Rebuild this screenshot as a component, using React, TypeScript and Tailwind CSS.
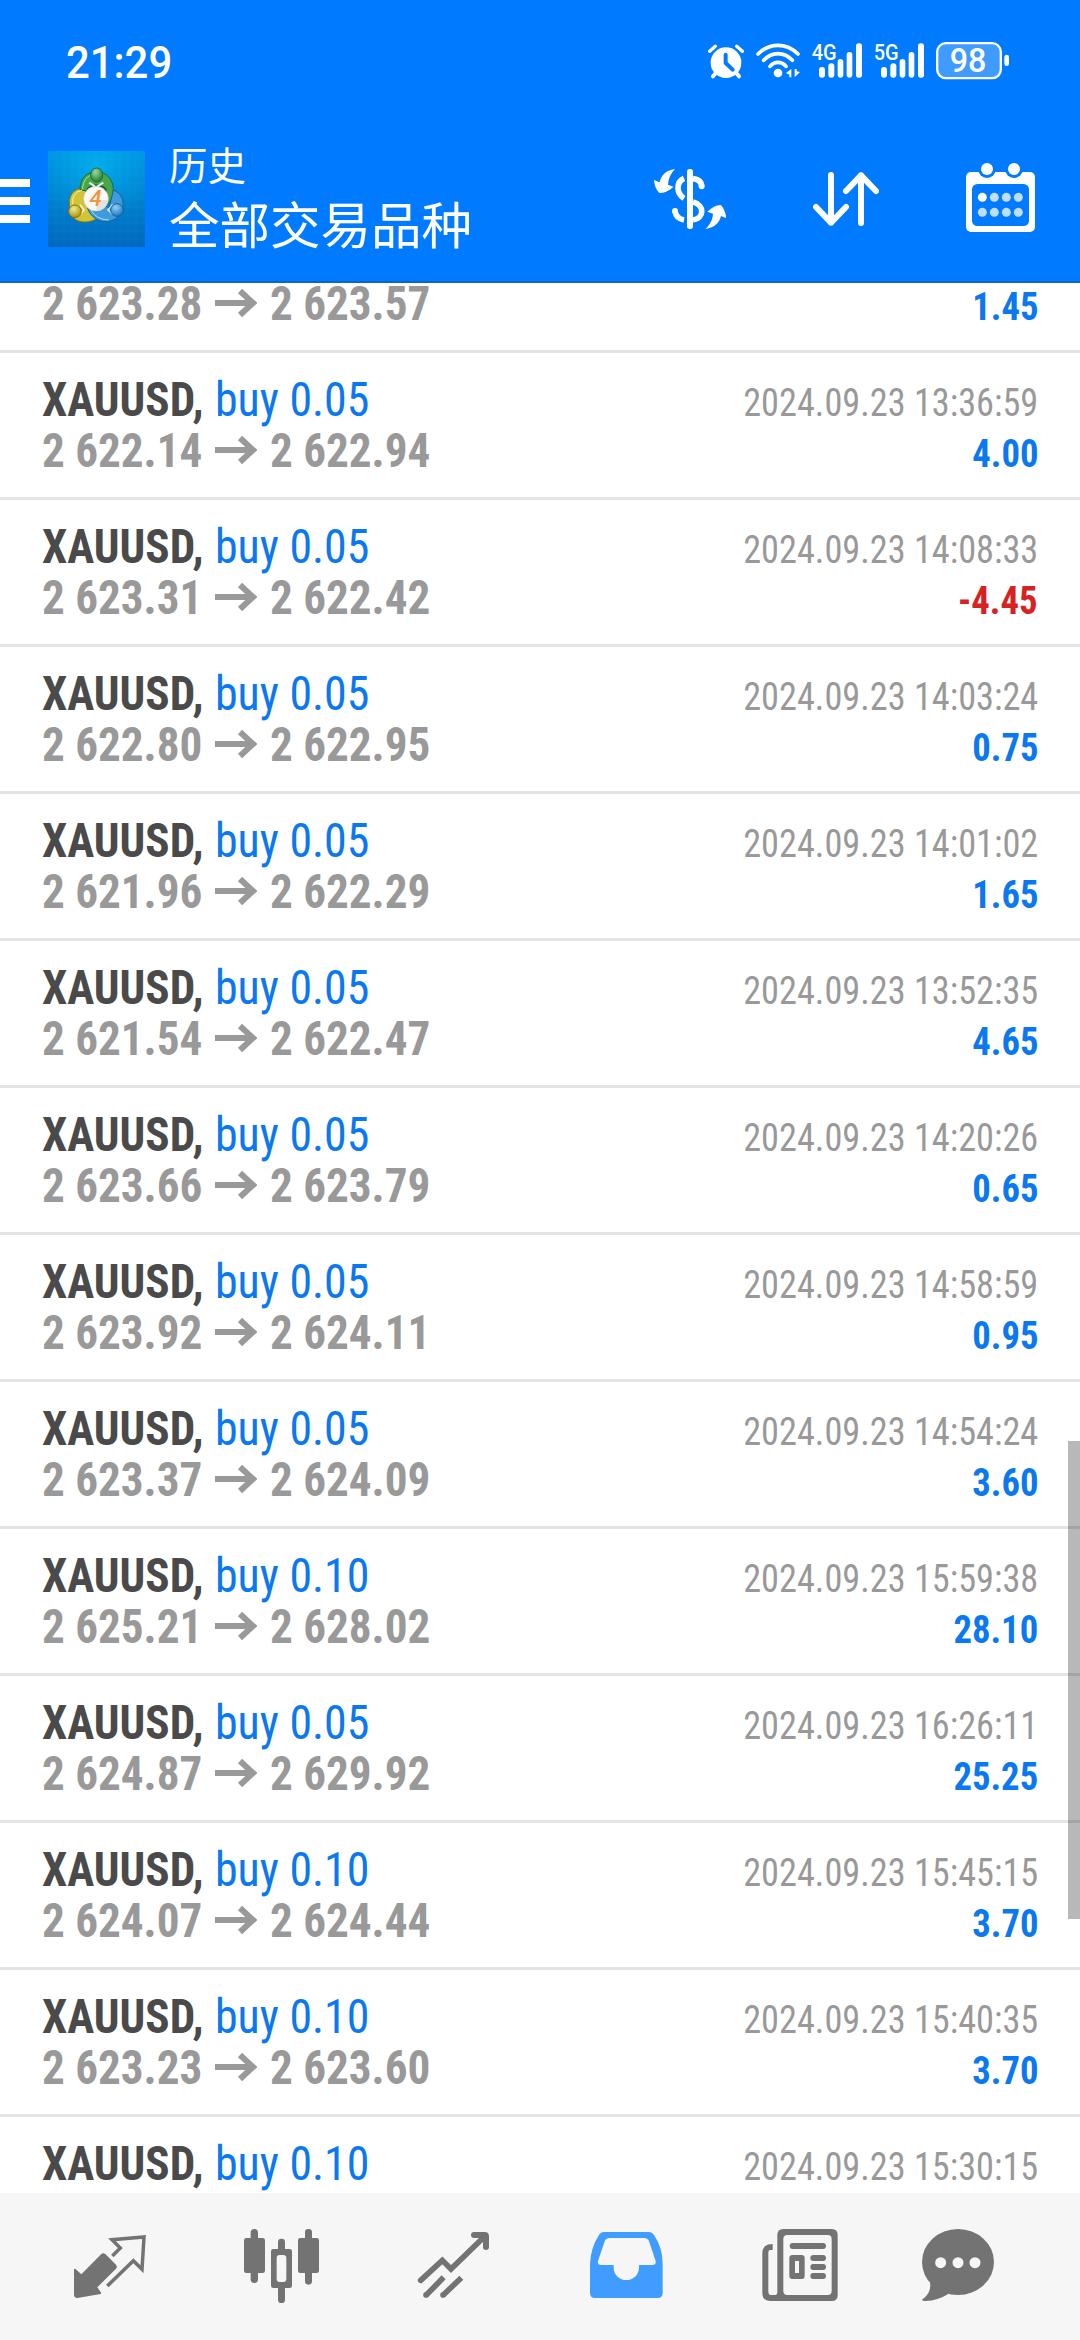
type Deal = {
  volume: string;
  from?: string;
  to?: string;
  time?: string;
  profit?: string;
};

const deals: Deal[] = [
  { volume: "0.05", from: "2 623.28", to: "2 623.57", profit: "1.45" },
  { volume: "0.05", from: "2 622.14", to: "2 622.94", time: "2024.09.23 13:36:59", profit: "4.00" },
  { volume: "0.05", from: "2 623.31", to: "2 622.42", time: "2024.09.23 14:08:33", profit: "-4.45" },
  { volume: "0.05", from: "2 622.80", to: "2 622.95", time: "2024.09.23 14:03:24", profit: "0.75" },
  { volume: "0.05", from: "2 621.96", to: "2 622.29", time: "2024.09.23 14:01:02", profit: "1.65" },
  { volume: "0.05", from: "2 621.54", to: "2 622.47", time: "2024.09.23 13:52:35", profit: "4.65" },
  { volume: "0.05", from: "2 623.66", to: "2 623.79", time: "2024.09.23 14:20:26", profit: "0.65" },
  { volume: "0.05", from: "2 623.92", to: "2 624.11", time: "2024.09.23 14:58:59", profit: "0.95" },
  { volume: "0.05", from: "2 623.37", to: "2 624.09", time: "2024.09.23 14:54:24", profit: "3.60" },
  { volume: "0.10", from: "2 625.21", to: "2 628.02", time: "2024.09.23 15:59:38", profit: "28.10" },
  { volume: "0.05", from: "2 624.87", to: "2 629.92", time: "2024.09.23 16:26:11", profit: "25.25" },
  { volume: "0.10", from: "2 624.07", to: "2 624.44", time: "2024.09.23 15:45:15", profit: "3.70" },
  { volume: "0.10", from: "2 623.23", to: "2 623.60", time: "2024.09.23 15:40:35", profit: "3.70" },
  { volume: "0.10", time: "2024.09.23 15:30:15" },
];

const AlarmIcon = () => (
  <svg className="w-9 h-[42px]" viewBox="264 60 108 126" fill="none" stroke="#fff" strokeLinecap="round">
    <circle cx="318" cy="128" r="46" fill="#fff" stroke="none" />
    <path d="M269 94L286 79M350 79L367 94" strokeWidth="10" />
    <path d="M288 158L279 169M348 158L357 169" strokeWidth="12" />
    <path d="M317 104V129L338 149" stroke="#007aff" strokeWidth="12" strokeLinejoin="round" />
  </svg>
);

const WifiIcon = () => (
  <svg className="w-11 h-[42px]" viewBox="408 60 132 126" fill="none" stroke="#fff" strokeLinecap="round">
    <path d="M414 102Q440 76 474 76T534 102M431 121Q450 101 474 101T517 121M450 139Q460 127 474 127T498 139" strokeWidth="11" />
    <circle cx="474" cy="159" r="13" fill="#fff" stroke="none" />
    <path d="M498 159L514 147V172H508V164ZM540 156L524 172V147H530V154Z" fill="#fff" stroke="none" />
  </svg>
);

const Signal = ({ label }: { label: string }) => (
  <svg className="w-[50px] h-[42px]" viewBox="576 60 150 126" fill="#fff">
    <rect x="597" y="141" width="18" height="32" rx="9" />
    <rect x="625" y="130" width="18" height="43" rx="9" />
    <rect x="653" y="117" width="17" height="56" rx="8.5" />
    <rect x="680" y="96" width="17" height="77" rx="8.5" />
    <rect x="708" y="70" width="18" height="103" rx="8" />
    <text
      x="575"
      y="121"
      textLength="75"
      lengthAdjust="spacingAndGlyphs"
      className="font-[Roboto] font-medium text-[67px]"
    >
      {label}
    </text>
  </svg>
);

const Battery = () => (
  <svg className="w-[73px] h-[42px]" viewBox="948 60 219 126" fill="#fff">
    <rect x="951.5" y="69.5" width="191" height="105" rx="26" fillOpacity="0.25" stroke="#fff" strokeWidth="7" />
    <rect x="1153" y="104" width="14" height="34" rx="7" />
    <text
      x="989"
      y="156"
      textLength="110"
      lengthAdjust="spacingAndGlyphs"
      className="font-[Roboto] font-medium text-[97px]"
    >
      98
    </text>
  </svg>
);

const AppLogo = () => (
  <svg className="w-[97px] h-24" viewBox="54 63 291 288">
    <defs>
      <linearGradient id="sky" x1="0" y1="0" x2="0" y2="1">
        <stop offset="0" stopColor="#0096e6" />
        <stop offset="0.5" stopColor="#0082d0" />
        <stop offset="1" stopColor="#0068be" />
      </linearGradient>
      <radialGradient id="glow" cx="0.5" cy="0.15" r="0.6">
        <stop offset="0" stopColor="#00b4f0" stopOpacity="0.8" />
        <stop offset="1" stopColor="#00a0e0" stopOpacity="0" />
      </radialGradient>
      <radialGradient id="green" cx="0.4" cy="0.3" r="0.7">
        <stop offset="0" stopColor="#9fd89a" />
        <stop offset="1" stopColor="#1f7f35" />
      </radialGradient>
      <radialGradient id="yellow" cx="0.4" cy="0.3" r="0.7">
        <stop offset="0" stopColor="#f3ec8a" />
        <stop offset="1" stopColor="#a89312" />
      </radialGradient>
      <radialGradient id="blue" cx="0.4" cy="0.3" r="0.7">
        <stop offset="0" stopColor="#8fd0f5" />
        <stop offset="1" stopColor="#1c78c0" />
      </radialGradient>
    </defs>
    <rect x="54" y="63" width="291" height="288" fill="url(#sky)" />
    <rect x="54" y="63" width="291" height="288" fill="url(#glow)" />
    <path
      d="M78 63V351M102 63V351M126 63V351M150 63V351M174 63V351M198 63V351M222 63V351M246 63V351M270 63V351M294 63V351M318 63V351M54 87H345M54 111H345M54 135H345M54 159H345M54 183H345M54 207H345M54 231H345M54 255H345M54 279H345M54 303H345M54 327H345"
      stroke="#fff"
      strokeOpacity="0.05"
      strokeWidth="2"
    />
    <g strokeWidth="3">
      <path d="M120 236C112 200 128 175 160 174L190 215L202 264C182 280 150 280 133 266Z" fill="#d3c437" stroke="#6f7a20" />
      <path d="M150 180C150 145 170 125 200 125S250 150 250 180C250 200 243 214 232 222L200 185L165 182Z" fill="#4aa64a" stroke="#1d6b35" />
      <path d="M250 180C275 190 284 212 277 240C270 262 248 276 222 275C196 272 176 252 172 230L205 225L238 232Z" fill="#3f9bdc" stroke="#1b5d9d" />
      <path d="M170 176C180 160 218 158 230 178L226 202H172Z" fill="#17602f" stroke="none" />
      <path d="M182 240Q198 268 236 270" fill="none" stroke="#a9dcfa" />
      <path d="M157 178Q160 136 196 132" fill="none" stroke="#a8dba0" />
      <path d="M128 222Q124 188 156 181" fill="none" stroke="#f7f0a0" />
      <path d="M178 158L198 172L220 158" fill="none" stroke="#e9f7e6" strokeWidth="6" />
      <path d="M150 224L162 240L150 254M248 224L234 240L248 252" fill="none" stroke="#fff" strokeOpacity="0.75" strokeWidth="5" />
      <ellipse cx="200" cy="135" rx="18" ry="21" fill="url(#green)" stroke="#1d6b35" />
      <circle cx="135" cy="244" r="19" fill="url(#yellow)" stroke="#857412" />
      <circle cx="261" cy="240" r="19" fill="url(#blue)" stroke="#1b5d9d" />
    </g>
    <circle cx="198" cy="206" r="37" fill="#fbfaf7" stroke="#c9c9c0" strokeWidth="2" />
    <path d="M200 210H234A36 36 0 0 1 199 242Z" fill="#e4e2dd" />
    <text x="197" y="229" textAnchor="middle" className="font-[Roboto] font-medium italic text-[66px]" fill="#f5923e">
      4
    </text>
  </svg>
);

const CurrencyIcon = () => (
  <svg className="w-[72px] h-[70px]" viewBox="102 429 216 210" fill="#fff">
    <rect x="201" y="447" width="18" height="180" rx="8" />
    <path
      d="M192 475C168 486 168 520 192 535M219 476C237 478 244 485 245 498M219 546C254 555 254 594 219 600M165 573C167 590 176 597 192 600"
      fill="none"
      stroke="#fff"
      strokeWidth="17"
    />
    <circle cx="245" cy="499" r="9" />
    <circle cx="165" cy="573" r="9" />
    <path d="M165 447C135 452 124 466 119 487L102 480C103 497 109 510 118 519C132 519 148 512 160 500L144 494C145 476 152 460 165 447Z" />
    <path d="M256 627C272 612 278 597 279 581L262 575C276 562 290 554 303 555C311 564 317 578 319 594L303 588C299 607 285 623 256 627Z" />
  </svg>
);

const SortIcon = () => (
  <svg
    className="w-[66px] h-[70px]"
    viewBox="579 429 198 210"
    fill="none"
    stroke="#fff"
    strokeWidth="18"
    strokeLinecap="round"
    strokeLinejoin="round"
  >
    <path d="M633 465V608M588 561L633 608L678 561M723 609V466M678 513L723 466L768 513" />
  </svg>
);

const CalendarIcon = () => (
  <svg className="w-[69px] h-[70px]" viewBox="1038 429 207 210" fill="#fff">
    <rect x="1038" y="456" width="207" height="180" rx="15" />
    <rect x="1056" y="492" width="171" height="126" rx="16" fill="#007aff" />
    <circle cx="1101" cy="447" r="27" fill="#007aff" />
    <circle cx="1182" cy="447" r="27" fill="#007aff" />
    <circle cx="1101" cy="447" r="18" />
    <circle cx="1182" cy="447" r="18" />
    {[532, 577].map((cy) =>
      [1087, 1123, 1159, 1195].map((cx) => (
        <circle
          key={`${cx}-${cy}`}
          cx={cx}
          cy={cy}
          r="13.5"
          fillOpacity={cx === 1087 && cy === 532 ? 1 : 0.75}
        />
      ))
    )}
  </svg>
);

const QuotesIcon = () => (
  <svg className="w-[84px] h-[100px]" viewBox="24 0 252 300" fill="#737373">
    <path d="M42 163Q45 159 49 164L64 178L124 117Q130 112 136 117L168 149Q173 155 168 161L112 217L124 234L122 237L52 249Q43 249 42 240Z" />
    <path d="M157 123L181 99L156 74L252 66L246 163L220 137L142 213" fill="none" stroke="#737373" strokeWidth="10.5" />
  </svg>
);

const ChartIcon = () => (
  <svg className="w-[84px] h-[100px]" viewBox="540 0 252 300" fill="#737373">
    <rect x="552" y="69" width="63" height="105" rx="7" />
    <rect x="572" y="42" width="22" height="162" rx="11" />
    <rect x="654" y="71" width="21" height="193" rx="10" />
    <rect x="633" y="102" width="63" height="117" rx="7" />
    <rect x="650" y="120" width="29" height="81" rx="9" fill="#f6f6f6" />
    <rect x="714" y="69" width="63" height="105" rx="7" />
    <rect x="735" y="42" width="21" height="167" rx="10" />
  </svg>
);

const TradeIcon = () => (
  <svg className="w-[84px] h-[100px]" viewBox="36 0 252 300" fill="none" stroke="#737373" strokeWidth="17">
    <path d="M62 196L127 136L153 162L252 66" strokeLinecap="round" />
    <path d="M222 60H254Q258 60 258 64V96" strokeLinecap="round" strokeWidth="18" />
    <path d="M78 241L131 187M129 241L184 188" />
    <circle cx="78" cy="240" r="8.5" fill="#737373" stroke="none" />
    <circle cx="129" cy="240" r="8.5" fill="#737373" stroke="none" />
  </svg>
);

const HistoryIcon = () => (
  <svg className="w-[84px] h-[100px]" viewBox="552 0 252 300" fill="#409cff">
    <path
      fillRule="evenodd"
      d="M612 51H748Q756 51 762 60Q788 98 788 148V234Q788 249 773 249H585Q570 249 570 234V148Q572 98 597 60Q602 51 612 51ZM630 69Q618 69 614 79L594 138Q592 150 604 150H641V158A38 37 0 0 0 717 158V150H757Q769 150 767 138L747 79Q743 69 732 69Z"
    />
  </svg>
);

const NewsIcon = () => (
  <svg className="w-[84px] h-[100px]" viewBox="48 0 252 300" fill="#737373">
    <path
      fillRule="evenodd"
      d="M130 42H275Q293 42 293 60V240Q293 258 275 258H92Q67 258 67 234V115Q67 87 98 87V105H91Q85 105 85 112V230Q85 240 95 240H105Q112 240 112 231V60Q112 42 130 42ZM142 60Q130 60 130 72V228Q130 240 142 240H263Q275 240 275 228V72Q275 60 263 60Z"
    />
    <rect x="149" y="84" width="109" height="18" rx="9" />
    <path
      fillRule="evenodd"
      d="M157 120H185Q194 120 194 129V183Q194 192 185 192H157Q148 192 148 183V129Q148 120 157 120ZM165 138V174H177V138Z"
    />
    <rect x="211" y="120" width="47" height="18" rx="9" />
    <rect x="211" y="147" width="47" height="18" rx="9" />
    <rect x="211" y="174" width="47" height="18" rx="9" />
  </svg>
);

const ChatIcon = () => (
  <svg className="w-[84px] h-[100px]" viewBox="564 0 252 300" fill="#737373" overflow="visible">
    <ellipse cx="654" cy="141" rx="108" ry="99" />
    <path d="M570 200C574 228 562 242 547 253Q544 258 556 258Q595 256 626 236Z" />
    <g fill="#f6f6f6">
      <circle cx="602" cy="143" r="16.5" />
      <circle cx="654" cy="143" r="16.5" />
      <circle cx="705" cy="143" r="16.5" />
    </g>
  </svg>
);

const PriceArrow = () => (
  <svg className="-mt-[2px] w-[42px] h-[30px]" viewBox="0 0 42 30" fill="none" stroke="currentColor" strokeWidth="6">
    <path d="M0 15H38M25 3L38 15L25 27" />
  </svg>
);

const DealRow = ({ deal }: { deal: Deal }) => (
  <li className="flex h-[147px] shrink-0 justify-between border-b-[3px] border-[#e4e4e4] px-[42px] whitespace-nowrap">
    <div className="pt-[21px] text-[48px] leading-[51px]">
      <div className="flex">
        <span className="w-[173px]">
          <span className="inline-block origin-left scale-x-[0.94] font-bold text-[#4a4a4a]">XAUUSD,</span>
        </span>
        <span className="inline-block origin-left scale-x-[0.955] text-[#0a78f0]">buy {deal.volume}</span>
      </div>
      {deal.from && (
        <div className="flex items-center font-bold text-[#999]">
          <span className="w-[173px]">
            <span className="inline-block origin-left scale-x-[0.94]">{deal.from}</span>
          </span>
          <PriceArrow />
          <span className="ml-[13px] inline-block origin-left scale-x-[0.94]">{deal.to}</span>
        </div>
      )}
    </div>
    <div className="flex flex-col items-end pt-[25px] text-[39px] leading-[51px]">
      <span className="h-[51px] origin-right scale-x-[0.93] text-[#999]">{deal.time}</span>
      {deal.profit && (
        <span
          className={`origin-right scale-x-[0.94] font-bold ${
            deal.profit.startsWith("-") ? "text-[#d62222]" : "text-[#0a78f0]"
          }`}
        >
          {deal.profit}
        </span>
      )}
    </div>
  </li>
);

export default function App() {
  return (
    <div className="flex h-[2340px] w-[1080px] flex-col overflow-hidden bg-white [font-family:'Roboto_Condensed',Roboto,sans-serif]">
      <header className="h-[283px] shrink-0 border-b-2 border-[#0a68c4] bg-[#007aff] text-white">
        {/* Status bar */}
        <div className="flex h-[122px] items-center justify-between pl-[66px] pr-[71px]">
          <span className="origin-left scale-x-[0.93] pt-[3px] font-[Roboto] text-[45px] font-medium leading-none">
            21:29
          </span>
          <div className="flex items-center gap-3">
            <AlarmIcon />
            <WifiIcon />
            <Signal label="4G" />
            <Signal label="5G" />
            <Battery />
          </div>
        </div>

        {/* App bar */}
        <div className="flex items-start pr-[45px]">
          <button className="mt-[57px] flex w-[30px] flex-col gap-[10px]" aria-label="菜单">
            <span className="h-2 w-full bg-white" />
            <span className="h-2 w-full bg-white" />
            <span className="h-2 w-full bg-white" />
          </button>
          <div className="ml-[18px] mt-[29px]">
            <AppLogo />
          </div>
          <div className="ml-6 mt-[18px] [font-family:'Noto_Sans_CJK_SC',sans-serif]">
            <div className="text-[38.5px] leading-[46px]">历史</div>
            <div className="mt-[9px] text-[50.5px] leading-[54px]">全部交易品种</div>
          </div>
          <div className="ml-auto mt-[41px] flex gap-[87px]">
            <CurrencyIcon />
            <SortIcon />
            <CalendarIcon />
          </div>
        </div>
      </header>

      <main className="relative h-[1910px] shrink-0 overflow-hidden">
        <ul className="-mt-[77px] flex flex-col">
          {deals.map((deal, i) => (
            <DealRow key={i} deal={deal} />
          ))}
        </ul>
        {/* Scroll thumb */}
        <div className="absolute right-0 top-[1158px] h-[478px] w-3 bg-black/28" />
      </main>

      <nav className="flex h-[147px] shrink-0 bg-[#f6f6f6] px-6 pt-[22px]">
        {[QuotesIcon, ChartIcon, TradeIcon, HistoryIcon, NewsIcon, ChatIcon].map((Icon, i) => (
          <button key={i} className="flex flex-1 items-start justify-center">
            <Icon />
          </button>
        ))}
      </nav>
    </div>
  );
}
